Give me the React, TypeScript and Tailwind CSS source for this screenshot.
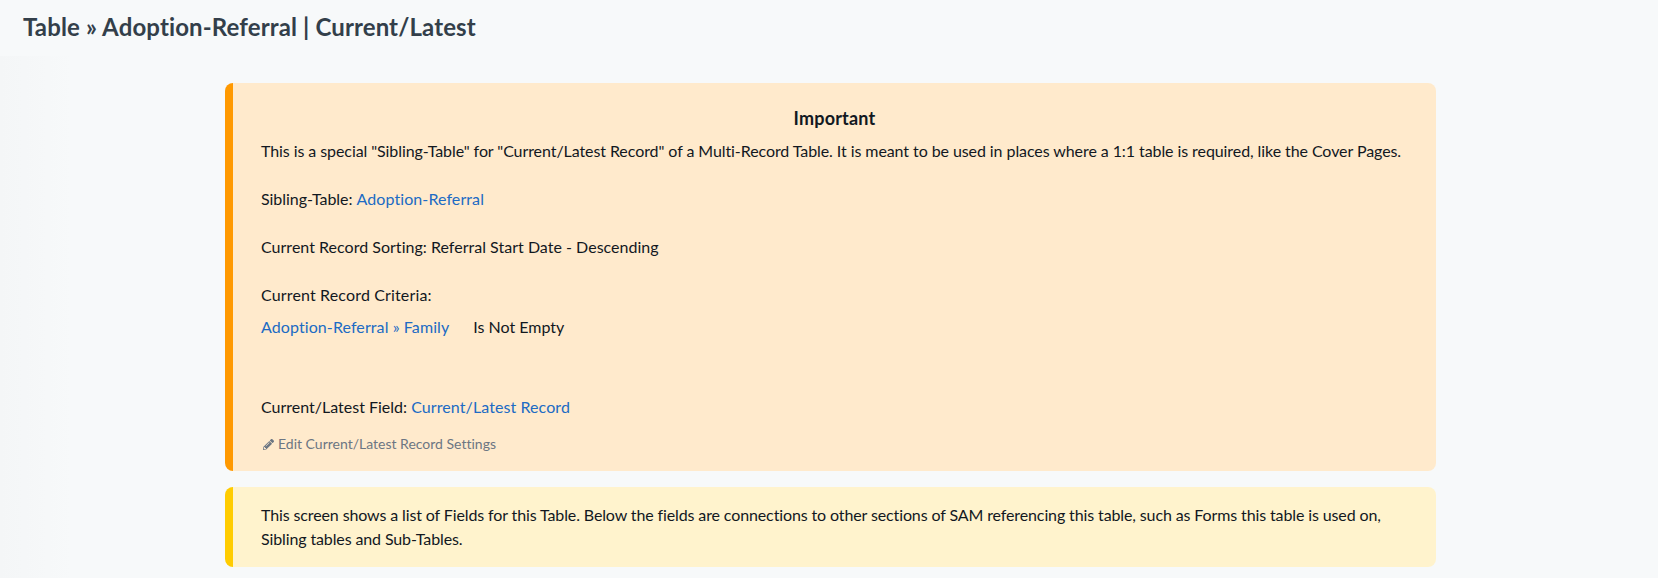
import { ReactNode } from 'react';
import { FaPencilAlt } from 'react-icons/fa';

const criteria = [
    { field: 'Adoption-Referral » Family', condition: 'Is Not Empty' },
];

function TextLink({ children }: { children: ReactNode }) {
    return (
        <a href="#" className="tracking-[0.09px] text-[#206bc4] hover:underline">
            {children}
        </a>
    );
}

function ImportantNotice() {
    return (
        <section className="h-[388px] rounded-lg border-l-8 border-[#ff9900] bg-[#ffeacc] px-7 pt-6">
            <h2 className="-mt-px mb-[9px] text-center text-lg leading-6 font-bold tracking-[0.2px]">Important</h2>
            <p className="tracking-[-0.08px] whitespace-nowrap">
                This is a special "Sibling-Table" for "Current/Latest Record" of a Multi-Record Table. It is meant to be used in places where a 1:1 table is required, like the Cover Pages.
            </p>

            <p className="mt-6 tracking-[-0.04px]">
                Sibling-Table: <TextLink>Adoption-Referral</TextLink>
            </p>
            <p className="mt-6 tracking-[0.02px]">Current Record Sorting: Referral Start Date - Descending</p>

            {/* Criteria */}
            <p className="mt-6 tracking-[0.15px]">Current Record Criteria:</p>
            <div className="mt-2 mb-14">
                {criteria.map((row) => (
                    <div key={row.field} className="flex gap-6">
                        <TextLink>{row.field}</TextLink>
                        <span>{row.condition}</span>
                    </div>
                ))}
            </div>

            <p>
                Current/Latest Field: <TextLink>Current/Latest Record</TextLink>
            </p>
            <button className="mt-[13px] flex items-center text-sm leading-6 text-[#6c7683]">
                <FaPencilAlt className="mr-1 ml-0.5 h-[11px] w-[11px]" />
                Edit Current/Latest Record Settings
            </button>
        </section>
    );
}

export default function App() {
    return (
        <div className="flex h-[578px] flex-col overflow-hidden bg-[#f7f9fa] font-['Lato',sans-serif] text-base text-[#12181f] [font-variant-ligatures:none]">
            <header className="flex h-14 shrink-0 items-center px-[23px] pb-0.5">
                <h1 className="text-2xl font-bold tracking-[0.125px] text-[#333f4a]">
                    Table » Adoption-Referral | Current/Latest
                </h1>
            </header>

            <main className="flex-1 bg-[linear-gradient(to_right,#f4f6f7,#f7f9fa_72px)] pt-[27px] pl-[225px]">
                <div className="flex w-[1211px] flex-col gap-4">
                    <ImportantNotice />
                    <section className="rounded-lg border-l-8 border-[#ffcc00] bg-[#fff3cd] px-7 py-4">
                        <p className="tracking-[-0.12px]">
                            This screen shows a list of Fields for this Table. Below the fields are connections to other sections of SAM referencing this table, such as Forms this table is used on, Sibling tables and Sub-Tables.
                        </p>
                    </section>
                </div>
            </main>
        </div>
    );
}
